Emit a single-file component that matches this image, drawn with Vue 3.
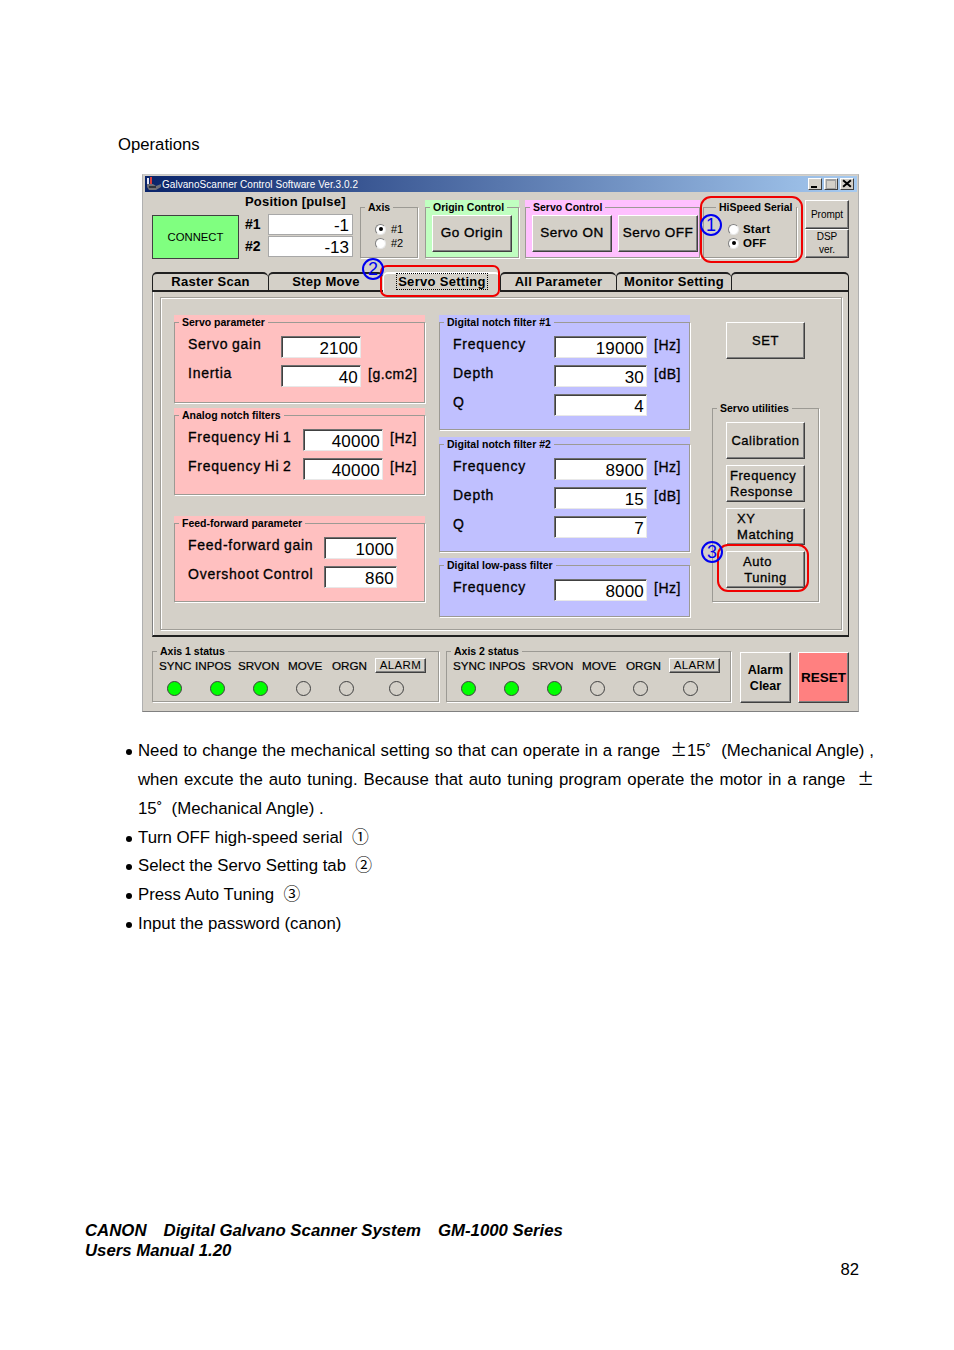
<template>
  <div class="page">
    <p class="heading">Operations</p>

    <div class="window">
      <div class="titlebar">
        <svg class="app-icon" viewBox="0 0 16 14">
          <rect x="1" y="1" width="2" height="6" fill="#e8e8f8" />
          <rect x="4" y="0" width="2" height="7" fill="#d84040" />
          <path d="M1 7h6l3 2 5-2v3l-5 3H3L1 10z" fill="#707078" />
          <path d="M3 9h7v2H3z" fill="#30343c" />
        </svg>
        <span class="title-text">GalvanoScanner Control Software Ver.3.0.2</span>
        <div class="caption-buttons">
          <span class="caption-btn"><i class="glyph-min"></i></span>
          <span class="caption-btn caption-btn--off"><i class="glyph-max"></i></span>
          <span class="caption-btn caption-btn--close">
            <svg viewBox="0 0 9 8"><path d="M1 1l7 6M8 1L1 7" stroke="#000" stroke-width="1.8" /></svg>
          </span>
        </div>
      </div>

      <div class="body">
        <div class="top-row">
          <button class="btn connect">CONNECT</button>

          <div class="position">
            <div class="position-title">Position [pulse]</div>
            <div class="position-row" v-for="p in positions" :key="p.label">
              <span class="position-label">{{ p.label }}</span>
              <span class="position-value">{{ p.value }}</span>
            </div>
          </div>

          <fieldset class="frame axis">
            <legend>Axis</legend>
            <div class="radios radios--axis">
              <div class="radio-row" v-for="r in axisRadios" :key="r.label">
                <i class="radio" :class="{ 'radio--on': r.on }"></i><span class="radio-label">{{ r.label }}</span>
              </div>
            </div>
          </fieldset>

          <div class="tint tint--green origin">
            <fieldset class="frame">
              <legend>Origin Control</legend>
              <button class="btn cmd cmd--origin">Go Origin</button>
            </fieldset>
          </div>

          <div class="tint tint--magenta servo-control">
            <fieldset class="frame">
              <legend>Servo Control</legend>
              <div class="servo-buttons">
                <button class="btn cmd">Servo ON</button>
                <button class="btn cmd">Servo OFF</button>
              </div>
            </fieldset>
          </div>

          <fieldset class="frame hispeed">
            <legend>HiSpeed Serial</legend>
            <div class="radios radios--serial">
              <div class="radio-row" v-for="r in serialRadios" :key="r.label">
                <i class="radio" :class="{ 'radio--on': r.on }"></i><span class="radio-label radio-label--bold">{{ r.label }}</span>
              </div>
            </div>
          </fieldset>

          <div class="side-buttons">
            <button class="btn side side--prompt">Prompt</button>
            <button class="btn side">DSP<br />ver.</button>
          </div>
        </div>

        <div class="tabs">
          <div
            v-for="t in tabs"
            :key="t.label"
            class="tab"
            :class="{ 'tab--active': t.active }"
            :style="{ width: t.width + 'px' }"
          >
            <span class="tab-label">{{ t.label }}</span>
          </div>
          <div class="tab tab--filler"></div>
        </div>

        <div class="panel">
          <div class="panel-inner">
            <div class="param-col" v-for="(col, i) in columns" :key="i">
              <div
                v-for="g in col.groups"
                :key="g.title"
                class="tint"
                :class="'tint--' + col.tint"
                :style="{ height: g.height + 'px', marginBottom: g.gap + 'px' }"
              >
                <fieldset class="frame param-frame">
                  <legend>{{ g.title }}</legend>
                  <div class="field" v-for="f in g.fields" :key="f.label">
                    <span class="field-label" :style="{ width: g.labelW + 'px' }">{{ f.label }}</span>
                    <span class="field-input" :style="{ width: g.inputW + 'px' }">{{ f.value }}</span>
                    <span class="field-unit" v-if="f.unit">{{ f.unit }}</span>
                  </div>
                </fieldset>
              </div>
            </div>

            <div class="util-col">
              <button class="btn util util--set">SET</button>
              <fieldset class="frame utilities">
                <legend>Servo utilities</legend>
                <div class="util-list">
                  <button class="btn util">Calibration</button>
                  <button class="btn util util--left">Frequency<br />Response</button>
                  <button class="btn util util--xy">XY<br />Matching</button>
                  <button class="btn util util--auto"><span class="auto-first">Auto</span><br />Tuning</button>
                </div>
              </fieldset>
            </div>
          </div>
        </div>

        <div class="status-row">
          <fieldset class="frame status" v-for="a in axes" :key="a" :class="'status--' + a">
            <legend>Axis {{ a }} status</legend>
            <div class="status-labels">
              <span
                class="status-label"
                v-for="s in statusNames"
                :key="s.name"
                :style="{ width: s.width + 'px' }"
              >{{ s.name }}</span>
              <button class="btn alarm">ALARM</button>
            </div>
            <div class="status-leds">
              <span class="led-cell" v-for="(on, n) in leds" :key="n"><i class="led" :class="{ 'led--on': on }"></i></span>
            </div>
          </fieldset>
          <button class="btn big alarm-clear">Alarm<br />Clear</button>
          <button class="btn big reset">RESET</button>
        </div>
      </div>

      <!-- red callouts drawn over the screenshot -->
      <span class="callout callout--serial"></span>
      <span class="callout callout--tab"></span>
      <span class="callout callout--auto"></span>
      <span class="marker marker--1">1</span>
      <span class="marker marker--2">2</span>
      <span class="marker marker--3">3</span>
    </div>

    <ul class="notes">
      <li>
        <div class="just">Need to change the mechanical setting so that can operate in a range &nbsp;<span class="cjk">±</span>15˚ &nbsp;(Mechanical Angle) ,</div>
        <div class="just">when excute the auto tuning. Because that auto tuning program operate the motor in a range &nbsp;<span class="cjk">±</span></div>
        <div>15˚ &nbsp;(Mechanical Angle) .</div>
      </li>
      <li>Turn OFF high-speed serial &nbsp;<span class="cjk">①</span></li>
      <li>Select the Servo Setting tab &nbsp;<span class="cjk">②</span></li>
      <li>Press Auto Tuning &nbsp;<span class="cjk">③</span></li>
      <li>Input the password (canon)</li>
    </ul>

    <footer class="footer">
      <div>CANON<span class="footer-gap">Digital Galvano Scanner System</span><span class="footer-gap">GM-1000 Series</span></div>
      <div>Users Manual 1.20</div>
    </footer>
    <div class="page-no">82</div>
  </div>
</template>

<script setup>
const positions = [
  { label: '#1', value: '-1' },
  { label: '#2', value: '-13' }
]

const axisRadios = [
  { label: '#1', on: true },
  { label: '#2', on: false }
]

const serialRadios = [
  { label: 'Start', on: false },
  { label: 'OFF', on: true }
]

const tabs = [
  { label: 'Raster Scan', width: 116 },
  { label: 'Step Move', width: 115 },
  { label: 'Servo Setting', width: 117, active: true },
  { label: 'All Parameter', width: 116 },
  { label: 'Monitor Setting', width: 115 }
]

const columns = [
  {
    tint: 'pink',
    groups: [
      {
        title: 'Servo parameter', height: 88, gap: 5, labelW: 93, inputW: 80,
        fields: [
          { label: 'Servo gain', value: '2100' },
          { label: 'Inertia', value: '40', unit: '[g.cm2]' }
        ]
      },
      {
        title: 'Analog notch filters', height: 87, gap: 21, labelW: 115, inputW: 80,
        fields: [
          { label: 'Frequency Hi 1', value: '40000', unit: '[Hz]' },
          { label: 'Frequency Hi 2', value: '40000', unit: '[Hz]' }
        ]
      },
      {
        title: 'Feed-forward parameter', height: 86, gap: 0, labelW: 136, inputW: 73,
        fields: [
          { label: 'Feed-forward gain', value: '1000' },
          { label: 'Overshoot Control', value: '860' }
        ]
      }
    ]
  },
  {
    tint: 'blue',
    groups: [
      {
        title: 'Digital notch filter #1', height: 115, gap: 7, labelW: 101, inputW: 93,
        fields: [
          { label: 'Frequency', value: '19000', unit: '[Hz]' },
          { label: 'Depth', value: '30', unit: '[dB]' },
          { label: 'Q', value: '4' }
        ]
      },
      {
        title: 'Digital notch filter #2', height: 115, gap: 6, labelW: 101, inputW: 93,
        fields: [
          { label: 'Frequency', value: '8900', unit: '[Hz]' },
          { label: 'Depth', value: '15', unit: '[dB]' },
          { label: 'Q', value: '7' }
        ]
      },
      {
        title: 'Digital low-pass filter', height: 59, gap: 0, labelW: 101, inputW: 93,
        fields: [
          { label: 'Frequency', value: '8000', unit: '[Hz]' }
        ]
      }
    ]
  }
]

const axes = [1, 2]
const statusNames = [
  { name: 'SYNC', width: 36 },
  { name: 'INPOS', width: 43 },
  { name: 'SRVON', width: 50 },
  { name: 'MOVE', width: 44 },
  { name: 'ORGN', width: 43 }
]
const leds = [true, true, true, false, false, false]
</script>

<style>
html,
body {
  margin: 0;
  background: #fff;
}
</style>

<style scoped>
.page {
  position: relative;
  width: 954px;
  height: 1350px;
  overflow: hidden;
  background: #fff;
  color: #000;
  font-family: "Liberation Sans", Arial, sans-serif;
}

.heading {
  margin: 0;
  padding: 135px 0 0 118px;
  font-size: 16.7px;
  line-height: 20px;
  height: 39px;
}

/* ---- window ---- */
.window {
  position: relative;
  box-sizing: border-box;
  width: 717px;
  height: 538px;
  margin-left: 142px;
  padding: 1px 1px 0 2px;
  background: #d4d0c8;
  border: 1px solid #b0b0b0;
  border-top-color: #c8c8c8;
  border-bottom-color: #808080;
}

button {
  font-family: inherit;
  color: #000;
  padding: 0;
  margin: 0;
}

.titlebar {
  display: flex;
  align-items: center;
  height: 16px;
  background: linear-gradient(90deg, #0a246a, #a6caf0);
  color: #fff;
}

.app-icon {
  width: 16px;
  height: 14px;
  margin-left: 1px;
}

.title-text {
  font-size: 10px;
  letter-spacing: 0.05px;
  white-space: nowrap;
}

.caption-buttons {
  display: flex;
  margin-left: auto;
  margin-right: 3px;
  gap: 2px;
}

.caption-btn {
  position: relative;
  box-sizing: border-box;
  display: block;
  width: 14px;
  height: 12px;
  background: #d4d0c8;
  border: 1px solid;
  border-color: #fff #404040 #404040 #fff;
}

.caption-btn--close svg {
  display: block;
  width: 10px;
  height: 9px;
  margin: 0 auto;
}

.glyph-min {
  position: absolute;
  left: 2px;
  bottom: 1px;
  width: 6px;
  height: 2px;
  background: #000;
}

.glyph-max {
  position: absolute;
  left: 1px;
  top: 0;
  width: 8px;
  height: 7px;
  border: 1px solid #a0a0a0;
  border-top-width: 2px;
  box-sizing: content-box;
}

.body {
  padding: 0 8px 0 7px;
}

/* ---- bevels and frames ---- */
.btn {
  box-sizing: border-box;
  display: block;
  background: #d4d0c8;
  border: 1px solid;
  border-color: #fff #404040 #404040 #fff;
  box-shadow: inset -1px -1px 0 #808080;
  line-height: 16px;
  white-space: nowrap;
}

.frame {
  box-sizing: border-box;
  min-width: 0;
  margin: 0;
  padding: 0;
  border: 1px solid #9c9a94;
  box-shadow: 1px 1px 0 #fff;
}

.frame legend {
  margin-left: 4px;
  padding: 0 3px;
  height: 14px;
  font-size: 10.5px;
  line-height: 14px;
  font-weight: bold;
  white-space: nowrap;
  background: var(--tint, #d4d0c8);
}

.tint {
  box-sizing: border-box;
}

.tint .frame {
  height: 100%;
}

.tint--green { --tint: #c0ffc0; background: #c0ffc0; }
.tint--magenta { --tint: #ffc0ff; background: #ffc0ff; }
.tint--pink { --tint: #ffc0c0; background: #ffc0c0; }
.tint--blue { --tint: #c0c0ff; background: #c0c0ff; }

/* ---- top row ---- */
.top-row {
  display: flex;
  align-items: flex-start;
  height: 70px;
}

.connect {
  width: 87px;
  height: 44px;
  margin-top: 23px;
  background: #80ff80;
  font-size: 11.3px;
  border-color: #404040;
  box-shadow: none;
}

.position {
  width: 108px;
  margin: 2px 0 0 6px;
}

.position-title {
  height: 19px;
  font-size: 13px;
  line-height: 15px;
  font-weight: bold;
  letter-spacing: 0.2px;
}

.position-row {
  display: flex;
  align-items: center;
  justify-content: space-between;
  height: 22px;
}

.position-label {
  font-size: 14px;
  font-weight: bold;
}

.position-value {
  box-sizing: border-box;
  width: 85px;
  height: 21px;
  padding-right: 3px;
  background: #fff;
  border: 1px solid #a8a8a8;
  font-size: 17px;
  line-height: 21px;
  text-align: right;
}

.axis {
  width: 58px;
  height: 58px;
  margin: 8px 0 0 7px;
}

.radios {
  padding-top: 8px;
}

.radios--axis {
  padding-left: 14px;
}

.radios--serial {
  padding-left: 24px;
}

.radio-row {
  display: flex;
  align-items: center;
  height: 14px;
}

.radio {
  box-sizing: border-box;
  position: relative;
  display: block;
  width: 11px;
  height: 11px;
  border-radius: 50%;
  background: #fff;
  border: 1px solid #808080;
  border-right-color: #e8e8e8;
  border-bottom-color: #e8e8e8;
}

.radio--on::after {
  content: "";
  position: absolute;
  left: 2.5px;
  top: 2.5px;
  width: 4px;
  height: 4px;
  border-radius: 50%;
  background: #000;
}

.radio-label {
  margin-left: 5px;
  font-size: 11px;
  line-height: 14px;
}

.radio-label--bold {
  margin-left: 4px;
  font-size: 11.5px;
  font-weight: bold;
  letter-spacing: 0.2px;
}

.origin {
  width: 94px;
  height: 58px;
  margin: 8px 0 0 7px;
}

.servo-control {
  width: 175px;
  height: 58px;
  margin: 8px 0 0 6px;
}

.cmd {
  width: 80px;
  height: 37px;
  margin: 1px 0 0 6px;
  padding-bottom: 2px;
  font-size: 13.5px;
  letter-spacing: 0.5px;
  -webkit-text-stroke: 0.35px #000;
}

.servo-buttons {
  display: flex;
  gap: 6px;
  padding-left: 6px;
}

.servo-buttons .cmd {
  margin-left: 0;
}

.hispeed {
  width: 94px;
  height: 58px;
  margin: 8px 0 0 3px;
}

.hispeed legend {
  margin-left: 12px;
}

.side-buttons {
  width: 44px;
  margin: 8px 0 0 8px;
}

.side {
  width: 44px;
  height: 29px;
  font-size: 10px;
  line-height: 12.5px;
  text-align: center;
}

.side--prompt {
  padding-top: 2px;
}

/* ---- tabs ---- */
.tabs {
  display: flex;
  margin-top: 10px;
  height: 18px;
  border-bottom: 2px solid #202020;
}

.tab {
  box-sizing: border-box;
  height: 18px;
  text-align: center;
  border: 1px solid #202020;
  border-bottom: 0;
  border-right-width: 0;
  border-top-width: 2px;
  border-radius: 5px 5px 0 0;
  font-size: 13px;
  line-height: 15px;
  font-weight: bold;
  letter-spacing: 0.3px;
}

.tab--active {
  height: 20px;
  position: relative;
  background: #d4d0c8;
  border-color: #fff;
}

.tab--active .tab-label {
  outline: 1px dotted #000;
  padding: 0 1px;
}

.tab--filler {
  flex: 1;
  border-right-width: 1px;
}

.panel {
  box-sizing: border-box;
  height: 345px;
  padding: 5px 6px 5px 7px;
  border-left: 1px solid #808080;
  border-right: 1px solid #202020;
  border-bottom: 2px solid #202020;
  box-shadow: inset 1px 0 0 #fff;
}

.panel-inner {
  box-sizing: border-box;
  display: flex;
  height: 333px;
  padding: 17px 0 0 13px;
  border: 1px solid #a09e98;
  box-shadow: inset 1px 1px 0 #fff, 1px 1px 0 #fff;
}

.param-col {
  width: 251px;
  margin-right: 14px;
}

.param-frame {
  display: block;
}

.field {
  display: flex;
  align-items: center;
  height: 22px;
  margin-bottom: 7px;
  padding-left: 13px;
}

.param-frame legend + .field {
  margin-top: 7px;
}

.field-label {
  flex: none;
  padding-bottom: 6px;
  font-size: 14px;
  letter-spacing: 0.75px;
  word-spacing: -1px;
  white-space: nowrap;
  -webkit-text-stroke: 0.3px #000;
}

.field-input {
  flex: none;
  box-sizing: border-box;
  height: 22px;
  padding-right: 2px;
  background: #fff;
  border: 1px solid;
  border-color: #707070 #e8e8e8 #e8e8e8 #707070;
  box-shadow: inset 1px 1px 0 #404040;
  font-size: 17px;
  line-height: 23px;
  letter-spacing: 0.2px;
  text-align: right;
}

.field-unit {
  margin-left: 7px;
  padding-bottom: 5px;
  font-size: 14px;
  letter-spacing: 0.5px;
  white-space: nowrap;
  -webkit-text-stroke: 0.3px #000;
}

.util-col {
  width: 107px;
  margin-left: 8px;
}

.util {
  width: 79px;
  height: 37px;
  font-size: 13px;
  letter-spacing: 0.55px;
  -webkit-text-stroke: 0.3px #000;
}

.util--set {
  margin: 7px 0 0 14px;
}

.utilities {
  height: 201px;
  margin-top: 42px;
}

.util-list {
  display: flex;
  flex-direction: column;
  gap: 6px;
  padding: 7px 0 0 13px;
}

.util--left {
  text-align: left;
  padding-left: 3px;
}

.util--xy {
  text-align: left;
  padding-left: 10px;
}

.auto-first {
  margin-right: 16px;
}

/* ---- status ---- */
.status-row {
  display: flex;
  align-items: flex-start;
  height: 59px;
  margin-top: 7px;
}

.status {
  height: 58px;
  width: 287px;
}

.status--2 {
  width: 285px;
  margin-left: 7px;
}

.status-labels {
  display: flex;
  height: 15px;
  padding-left: 6px;
}

.status-label {
  flex: none;
  font-size: 11.7px;
  line-height: 15px;
  white-space: nowrap;
  -webkit-text-stroke: 0.2px #000;
}

.alarm {
  width: 51px;
  height: 15px;
  font-size: 11.5px;
  line-height: 13px;
  letter-spacing: 0.4px;
}

.status-leds {
  display: grid;
  grid-template-columns: 43px 43px 43px 43px 43px 57px;
  height: 30px;
}

.led-cell {
  display: flex;
  justify-content: center;
  align-items: center;
}

.led {
  box-sizing: border-box;
  display: block;
  width: 15px;
  height: 15px;
  border-radius: 50%;
  border: 1px solid #404040;
}

.led--on {
  background: #00ff00;
}

.big {
  width: 51px;
  height: 51px;
  margin-top: 8px;
  font-size: 13.5px;
  font-weight: bold;
}

.alarm-clear {
  margin-left: 9px;
  font-size: 12.5px;
}

.reset {
  margin-left: 7px;
  background: #ff8080;
}

/* ---- callouts ---- */
.callout {
  position: absolute;
  box-sizing: border-box;
  border: 2.5px solid #f00000;
  border-radius: 11px;
}

.callout--serial { left: 557px; top: 21px; width: 103px; height: 67px; }
.callout--tab { left: 237px; top: 90px; width: 120px; height: 32px; border-radius: 7px; }
.callout--auto { left: 574px; top: 369px; width: 92px; height: 48px; }

.marker {
  position: absolute;
  box-sizing: border-box;
  width: 22px;
  height: 22px;
  border: 2px solid #0000f0;
  border-radius: 50%;
  color: #0000f0;
  font-size: 18px;
  line-height: 18px;
  text-align: center;
}

.marker--1 { left: 557px; top: 39px; }
.marker--2 { left: 219px; top: 83px; }
.marker--3 { left: 558px; top: 366px; }

/* ---- document text ---- */
.notes {
  width: 736px;
  margin: 25px 0 0 138px;
  padding: 0;
  list-style: none;
  font-size: 16.8px;
  line-height: 28.85px;
}

.notes li {
  position: relative;
}

.notes li::before {
  content: "";
  position: absolute;
  left: -12px;
  top: 12px;
  width: 6px;
  height: 6px;
  border-radius: 50%;
  background: #000;
}

.notes .just {
  text-align: justify;
  text-align-last: justify;
}

.cjk {
  font-family: "Noto Sans CJK SC", "Liberation Sans", sans-serif;
  line-height: 1;
}

.footer {
  margin: 282px 0 0 85px;
  font-size: 16.8px;
  line-height: 20px;
  font-weight: bold;
  font-style: italic;
}

.footer-gap {
  margin-left: 17px;
}

.page-no {
  width: 859px;
  margin-top: -1px;
  font-size: 16.7px;
  line-height: 20px;
  text-align: right;
}
</style>
